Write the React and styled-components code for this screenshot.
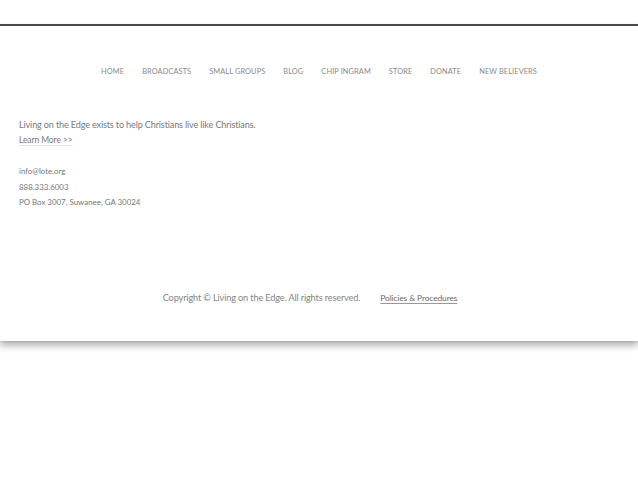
import React from "react";
import styled, { createGlobalStyle } from "styled-components";

const Global = createGlobalStyle`
  html, body { margin: 0; padding: 0; background: #fff; }
  body { font-family: Lato, "Open Sans", sans-serif; }
`;

const Page = styled.div`
  min-height: 100vh;
  padding-top: 24px;
  box-sizing: border-box;
  background: #fff;
`;

const Footer = styled.footer`
  border-top: 2px solid #4a4a4a;
  background: #fff;
  height: 315px;
  box-shadow: 0 5px 7px rgba(0, 0, 0, 0.28), 0 1px 2px rgba(0, 0, 0, 0.12);
  display: flex;
  flex-direction: column;
`;

const Nav = styled.nav`
  display: flex;
  justify-content: center;
  gap: 18px;
  padding-top: 41px;
  height: 10px;
`;

const NavItem = styled.a`
  font-size: 7.4px;
  line-height: 10px;
  color: #8a8a8a;
  text-transform: uppercase;
  text-decoration: none;
  letter-spacing: 0.1px;
`;

const About = styled.div`
  padding: 41px 0 0 19px;
  display: flex;
  flex-direction: column;
`;

const Mission = styled.p`
  margin: 0;
  font-size: 9.1px;
  line-height: 14px;
  color: #7a7a7a;
  letter-spacing: -0.15px;
`;

const LearnMore = styled.a`
  margin-top: 2px;
  align-self: flex-start;
  font-size: 8.5px;
  line-height: 12px;
  color: #7a7a7a;
  text-decoration: underline;
  text-decoration-color: #e2e2e2;
  text-underline-offset: 2px;
  letter-spacing: -0.1px;
`;

const Contact = styled.div`
  margin-top: 20px;
  display: flex;
  flex-direction: column;
  gap: 4px;
`;

const ContactLine = styled.span`
  font-size: 7.9px;
  line-height: 11.5px;
  color: #777;
`;

const Bottom = styled.div`
  margin-top: auto;
  margin-bottom: 37px;
  display: flex;
  justify-content: center;
  gap: 20px;
  padding-right: 18px;
`;

const Copyright = styled.span`
  font-size: 9.2px;
  line-height: 12px;
  color: #858585;
  letter-spacing: -0.15px;
`;

const Policy = styled.a`
  font-size: 8.4px;
  line-height: 12px;
  color: #6a6a6a;
  text-decoration: underline;
  text-decoration-color: #999;
  text-underline-offset: 2px;
  letter-spacing: -0.1px;
`;

const navItems = [
  "Home",
  "Broadcasts",
  "Small Groups",
  "Blog",
  "Chip Ingram",
  "Store",
  "Donate",
  "New Believers",
];

export default function App() {
  return (
    <>
      <Global />
      <Page>
        <Footer>
          <Nav>
            {navItems.map((n) => (
              <NavItem key={n} href="#">
                {n}
              </NavItem>
            ))}
          </Nav>
          <About>
            <Mission>
              Living on the Edge exists to help Christians live like Christians.
            </Mission>
            <LearnMore href="#">Learn More &gt;&gt;</LearnMore>
            <Contact>
              <ContactLine>info@lote.org</ContactLine>
              <ContactLine>888.333.6003</ContactLine>
              <ContactLine>PO Box 3007, Suwanee, GA 30024</ContactLine>
            </Contact>
          </About>
          <Bottom>
            <Copyright>
              Copyright © Living on the Edge. All rights reserved.
            </Copyright>
            <Policy href="#">Policies &amp; Procedures</Policy>
          </Bottom>
        </Footer>
      </Page>
    </>
  );
}
